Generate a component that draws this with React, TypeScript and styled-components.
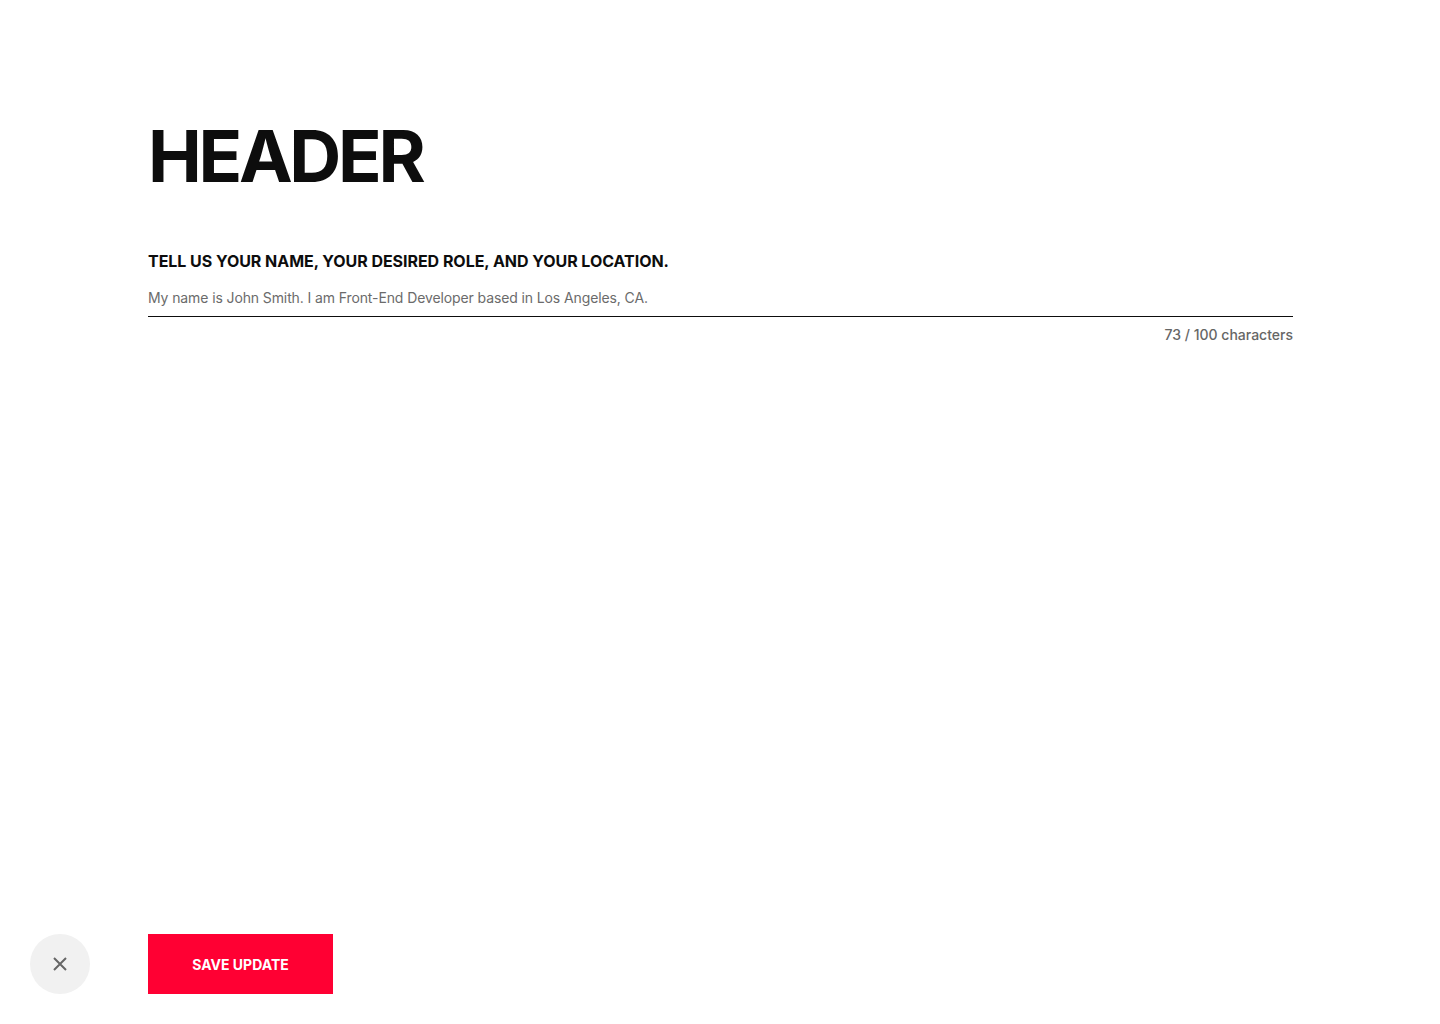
import React from 'react';
import styled, { createGlobalStyle } from 'styled-components';

const GlobalStyle = createGlobalStyle`
  html, body {
    margin: 0;
    padding: 0;
    background: #ffffff;
    font-family: Inter, "Noto Sans", sans-serif;
    color: #0d0d0d;
  }
`;

const Page = styled.div`
  height: 1024px;
  display: flex;
  flex-direction: column;
  box-sizing: border-box;
`;

const Content = styled.main`
  flex: 1;
  padding: 120px 147px 0 148px;
`;

const Title = styled.h1`
  margin: 0;
  font-size: 72px;
  line-height: 72px;
  font-weight: 700;
  letter-spacing: -0.046em;
  color: #0d0d0d;
`;

const Field = styled.div`
  margin-top: 59px;
  display: flex;
  flex-direction: column;
`;

const Label = styled.label`
  font-size: 16px;
  line-height: 20px;
  font-weight: 700;
  letter-spacing: -0.04px;
  color: #0d0d0d;
`;

const Input = styled.input`
  margin-top: 18px;
  padding: 0 0 9px;
  border: none;
  border-bottom: 1px solid #0d0d0d;
  outline: none;
  font-family: inherit;
  font-size: 14px;
  line-height: 18px;
  letter-spacing: -0.11px;
  color: #6b6b6b;
  background: transparent;
`;

const Counter = styled.div`
  margin-top: 9px;
  align-self: flex-end;
  font-size: 14px;
  line-height: 18px;
  font-weight: 500;
  color: #666666;
`;

const Footer = styled.footer`
  display: flex;
  align-items: center;
  gap: 58px;
  padding: 0 0 30px 30px;
`;

const CloseButton = styled.button`
  width: 60px;
  height: 60px;
  border-radius: 50%;
  border: none;
  background: #f1f1f1;
  display: flex;
  align-items: center;
  justify-content: center;
  padding: 0;
  cursor: pointer;
`;

const SaveButton = styled.button`
  width: 185px;
  height: 60px;
  border: none;
  background: #ff0033;
  color: #ffffff;
  font-family: inherit;
  font-size: 14px;
  font-weight: 700;
  cursor: pointer;
`;

const value = 'My name is John Smith. I am Front-End Developer based in Los Angeles, CA.';

export default function App() {
  return (
    <>
      <GlobalStyle />
      <Page>
        <Content>
          <Title>HEADER</Title>
          <Field>
            <Label htmlFor="intro">TELL US YOUR NAME, YOUR DESIRED ROLE, AND YOUR LOCATION.</Label>
            <Input id="intro" defaultValue={value} />
            <Counter>{value.length} / 100 characters</Counter>
          </Field>
        </Content>
        <Footer>
          <CloseButton aria-label="Close">
            <svg width="14" height="14" viewBox="0 0 14 14">
              <path d="M1 1L13 13M13 1L1 13" stroke="#666666" strokeWidth="2" />
            </svg>
          </CloseButton>
          <SaveButton>SAVE UPDATE</SaveButton>
        </Footer>
      </Page>
    </>
  );
}
